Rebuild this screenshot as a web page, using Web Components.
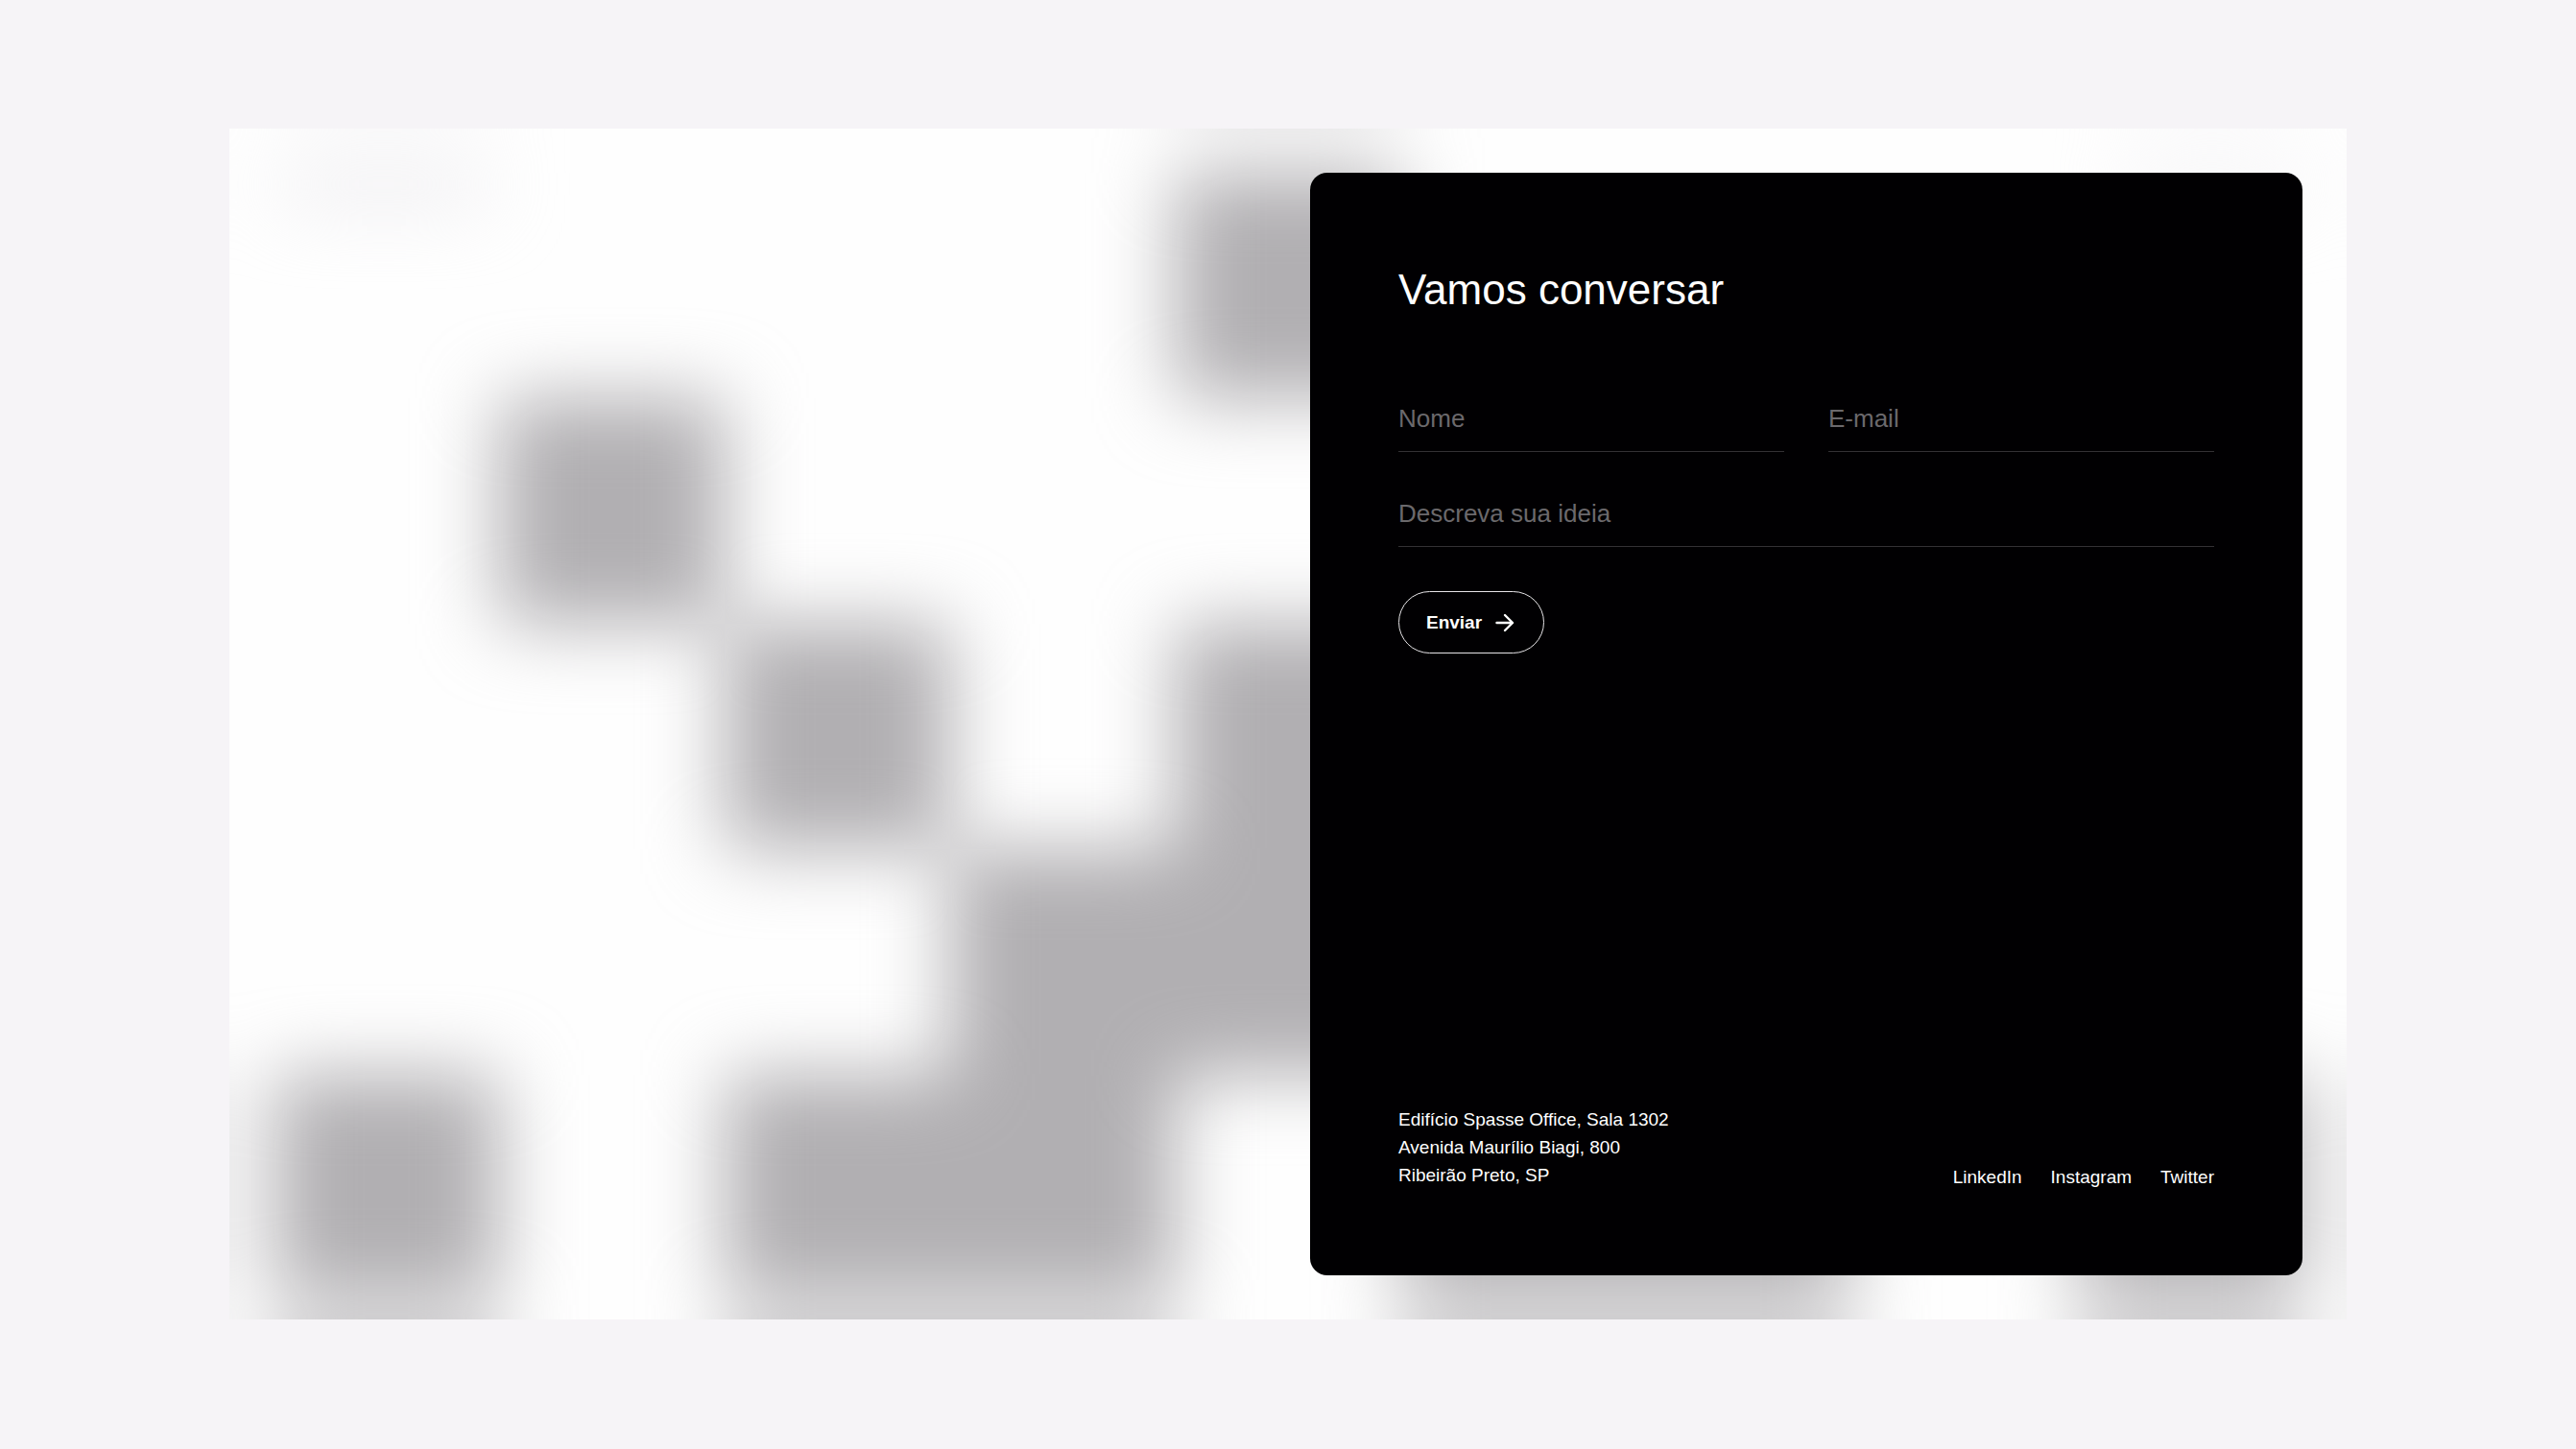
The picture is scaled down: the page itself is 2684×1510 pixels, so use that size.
<!DOCTYPE html>
<html lang="pt-BR">
<head>
<meta charset="utf-8">
<meta name="viewport" content="width=device-width, initial-scale=1">
<title>Vamos conversar</title>
<style>
  body {
    margin: 0;
    background: #f6f4f7;
    color: #fff;
    font-family: "Liberation Sans", Arial, sans-serif;
  }
</style>
</head>
<body>
<contact-stage>
  <contact-card>
    <span slot="title">Vamos conversar</span>
    <contact-form></contact-form>
    <contact-footer slot="footer">
      <span slot="address">Edifício Spasse Office, Sala 1302<br>Avenida Maurílio Biagi, 800<br>Ribeirão Preto, SP</span>
      <social-link href="#linkedin">LinkedIn</social-link>
      <social-link href="#instagram">Instagram</social-link>
      <social-link href="#twitter">Twitter</social-link>
    </contact-footer>
  </contact-card>
</contact-stage>

<script>
// Attach an open root with the given markup
function render(el, html) {
  const template = document.createElement('template');
  template.innerHTML = html;
  el.attachShadow({ mode: 'open' }).appendChild(template.content.cloneNode(true));
}

class PixelPattern extends HTMLElement {
  constructor() {
    super();
    // column, row of every filled cell
    const cells = [
      [4, 0], [1, 1], [2, 2], [4, 2], [3, 3], [4, 3],
      [0, 4], [2, 4], [3, 4], [5, 4], [6, 4], [8, 4]
    ];
    const pattern = `
      ${cells.map(([x, y]) => `<rect x="${x}" y="${y}" width="1" height="1"/>`).join('')}
      <rect x="0.04" y="0" width="0.9" height="0.11" fill="#e5e3e8"/>
      <rect x="8.2" y="0" width="0.8" height="0.11" fill="#efedf1"/>
    `;
    // The pattern is reflected past each side so the blur keeps its strength at the edges
    const mirrors = [
      'translate(-0.39 0) scale(-1 1)',
      'translate(18.39 0) scale(-1 1)',
      'translate(0 -0.39) scale(1 -1)',
      'translate(0 10.17) scale(1 -1)',
      'translate(-0.39 10.17) scale(-1 -1)',
      'translate(18.39 10.17) scale(-1 -1)'
    ];
    render(this, `
      <style>
        :host { display: block; }
        svg {
          display: block;
          width: 100%;
          overflow: visible;
          filter: blur(40px);
        }
      </style>
      <svg viewBox="0 0 9 5" fill="#b1afb2" shape-rendering="crispEdges" aria-hidden="true">
        ${pattern}
        ${mirrors.map((transform) => `<g transform="${transform}">${pattern}</g>`).join('')}
      </svg>
    `);
  }
}

class ContactStage extends HTMLElement {
  constructor() {
    super();
    render(this, `
      <style>
        :host {
          display: grid;
          box-sizing: border-box;
          min-height: 100vh;
          padding: 134px 239px 135px;
        }
        .stage {
          position: relative;
          display: grid;
          grid-template-columns: 1fr 1fr;
          gap: 46px;
          padding: 46px;
          overflow: hidden;
          background: #fefefe;
        }
        pixel-pattern {
          position: absolute;
          inset: 46px 46px auto;
        }
        ::slotted(contact-card) {
          grid-column: 2;
          position: relative;
        }
      </style>
      <div class="stage">
        <pixel-pattern></pixel-pattern>
        <slot></slot>
      </div>
    `);
  }
}

class ContactCard extends HTMLElement {
  constructor() {
    super();
    render(this, `
      <style>
        :host {
          display: flex;
          flex-direction: column;
          padding: 92px 92px 90px;
          border-radius: 18px;
          background: #010002;
        }
        h1 {
          margin: 0 0 86px;
          font-size: 44px;
          font-weight: 400;
          line-height: 60px;
        }
        footer { margin-top: auto; }
      </style>
      <h1><slot name="title"></slot></h1>
      <slot></slot>
      <footer><slot name="footer"></slot></footer>
    `);
  }
}

class TextField extends HTMLElement {
  constructor() {
    super();
    render(this, `
      <style>
        :host { display: block; }
        input {
          display: block;
          box-sizing: border-box;
          width: 100%;
          height: 53px;
          padding: 0 0 16px;
          border: 0;
          border-bottom: 1px solid #333134;
          border-radius: 0;
          outline: none;
          background: none;
          color: #fff;
          font: inherit;
          font-size: 26px;
        }
        input::placeholder {
          color: #6b696c;
          opacity: 1;
        }
        input:focus { border-color: #fff; }
      </style>
      <input>
    `);
  }

  connectedCallback() {
    const input = this.shadowRoot.querySelector('input');
    const label = this.getAttribute('label');
    input.type = this.getAttribute('type') || 'text';
    input.placeholder = label;
    input.setAttribute('aria-label', label);
  }
}

class SendButton extends HTMLElement {
  constructor() {
    super();
    render(this, `
      <style>
        :host { display: block; }
        button {
          display: flex;
          align-items: center;
          gap: 12px;
          height: 65px;
          padding: 0 28px;
          border: 1px solid #e6e4e7;
          border-radius: 33px;
          background: none;
          color: #fff;
          font: inherit;
          font-size: 19px;
          font-weight: 700;
          cursor: pointer;
        }
        svg { display: block; }
      </style>
      <button type="submit">
        <slot></slot>
        <svg width="24" height="24" viewBox="0 0 24 24" fill="none" stroke="currentColor" stroke-width="2.4" stroke-linecap="round" stroke-linejoin="round" aria-hidden="true">
          <path d="M3.5 12h16.5M12 4l8 8-8 8"/>
        </svg>
      </button>
    `);
  }
}

class ContactForm extends HTMLElement {
  constructor() {
    super();
    render(this, `
      <style>
        :host { display: block; }
        form {
          display: grid;
          grid-template-columns: 1fr 1fr;
          gap: 46px;
        }
        .wide { grid-column: 1 / -1; }
      </style>
      <form>
        <text-field label="Nome"></text-field>
        <text-field label="E-mail" type="email"></text-field>
        <text-field class="wide" label="Descreva sua ideia"></text-field>
        <send-button>Enviar</send-button>
      </form>
    `);
  }
}

class ContactFooter extends HTMLElement {
  constructor() {
    super();
    render(this, `
      <style>
        :host {
          display: flex;
          align-items: flex-end;
          justify-content: space-between;
          font-size: 19px;
        }
        address {
          font-style: normal;
          line-height: 29px;
        }
        nav {
          display: flex;
          gap: 30px;
          line-height: 25px;
        }
      </style>
      <address><slot name="address"></slot></address>
      <nav aria-label="Redes sociais"><slot></slot></nav>
    `);
  }
}

class SocialLink extends HTMLElement {
  constructor() {
    super();
    render(this, `
      <style>
        :host { display: block; }
        a {
          color: inherit;
          text-decoration: none;
        }
        a:hover { text-decoration: underline; }
      </style>
      <a><slot></slot></a>
    `);
  }

  connectedCallback() {
    this.shadowRoot.querySelector('a').href = this.getAttribute('href');
  }
}

customElements.define('pixel-pattern', PixelPattern);
customElements.define('text-field', TextField);
customElements.define('send-button', SendButton);
customElements.define('social-link', SocialLink);
customElements.define('contact-form', ContactForm);
customElements.define('contact-footer', ContactFooter);
customElements.define('contact-card', ContactCard);
customElements.define('contact-stage', ContactStage);
</script>
</body>
</html>
